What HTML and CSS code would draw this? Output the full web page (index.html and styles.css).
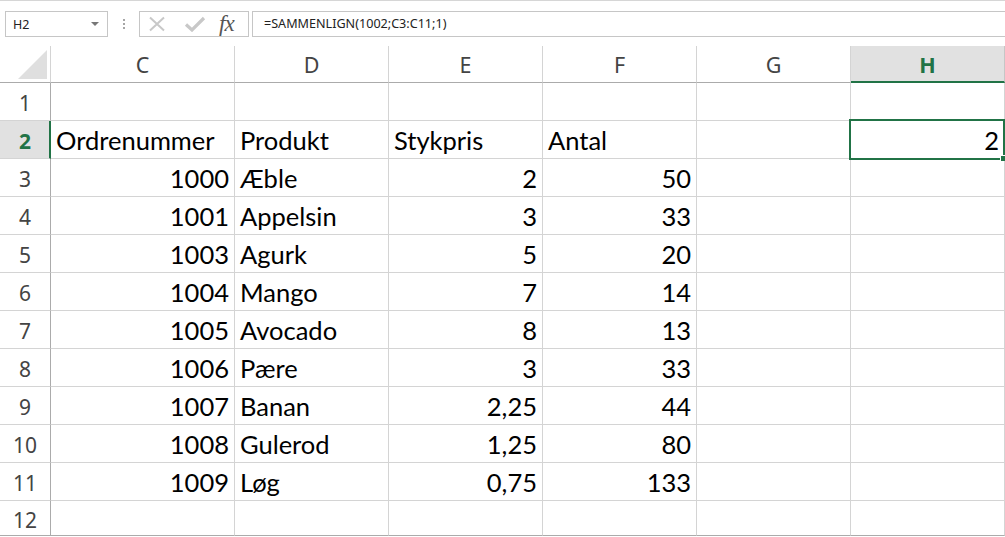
FILE: index.html
```html
<!DOCTYPE html>
<html lang="da">
<head>
<meta charset="utf-8">
<title>Excel</title>
<link rel="stylesheet" href="styles.css">
</head>
<body>
<div class="app">
  <div class="toolbar">
    <div class="namebox">
      <span class="name">H2</span>
      <span class="caret"></span>
    </div>
    <div class="grip"><i></i><i></i><i></i></div>
    <div class="fxbox">
      <svg class="ico" width="20" height="16" viewBox="0 0 20 16"><path d="M2 1.5 L16 14.5 M16 1.5 L2 14.5" stroke="#c8c8c8" stroke-width="2" fill="none"/></svg>
      <svg class="ico" width="22" height="16" viewBox="0 0 22 16"><path d="M2 8.5 L8 14 L20 2" stroke="#c8c8c8" stroke-width="3.2" fill="none"/></svg>
      <span class="fx">fx</span>
    </div>
    <div class="formula">=SAMMENLIGN(1002;C3:C11;1)</div>
  </div>
  <div class="sheet">
    <div class="corner"><span class="tri"></span></div>
    <div class="ch">C</div><div class="ch">D</div><div class="ch">E</div><div class="ch">F</div><div class="ch">G</div><div class="ch ch-sel">H</div>

    <div class="rh">1</div><div class="c"></div><div class="c"></div><div class="c"></div><div class="c"></div><div class="c"></div><div class="c"></div>

    <div class="rh rh-sel">2</div><div class="c">Ordrenummer</div><div class="c">Produkt</div><div class="c">Stykpris</div><div class="c">Antal</div><div class="c"></div><div class="c n sel">2<span class="selbox"></span><span class="handle"></span></div>

    <div class="rh">3</div><div class="c n">1000</div><div class="c">Æble</div><div class="c n">2</div><div class="c n">50</div><div class="c"></div><div class="c"></div>
    <div class="rh">4</div><div class="c n">1001</div><div class="c">Appelsin</div><div class="c n">3</div><div class="c n">33</div><div class="c"></div><div class="c"></div>
    <div class="rh">5</div><div class="c n">1003</div><div class="c">Agurk</div><div class="c n">5</div><div class="c n">20</div><div class="c"></div><div class="c"></div>
    <div class="rh">6</div><div class="c n">1004</div><div class="c">Mango</div><div class="c n">7</div><div class="c n">14</div><div class="c"></div><div class="c"></div>
    <div class="rh">7</div><div class="c n">1005</div><div class="c">Avocado</div><div class="c n">8</div><div class="c n">13</div><div class="c"></div><div class="c"></div>
    <div class="rh">8</div><div class="c n">1006</div><div class="c">Pære</div><div class="c n">3</div><div class="c n">33</div><div class="c"></div><div class="c"></div>
    <div class="rh">9</div><div class="c n">1007</div><div class="c">Banan</div><div class="c n">2,25</div><div class="c n">44</div><div class="c"></div><div class="c"></div>
    <div class="rh">10</div><div class="c n">1008</div><div class="c">Gulerod</div><div class="c n">1,25</div><div class="c n">80</div><div class="c"></div><div class="c"></div>
    <div class="rh">11</div><div class="c n">1009</div><div class="c">Løg</div><div class="c n">0,75</div><div class="c n">133</div><div class="c"></div><div class="c"></div>
    <div class="rh last">12</div><div class="c last"></div><div class="c last"></div><div class="c last"></div><div class="c last"></div><div class="c last"></div><div class="c last"></div>
  </div>
</div>
</body>
</html>
```
FILE: styles.css
```css
html, body {
  margin: 0;
  padding: 0;
  background: #ffffff;
}
.app {
  width: 1005px;
  height: 537px;
  overflow: hidden;
  font-family: "Noto Sans", "Open Sans", sans-serif;
}
.toolbar {
  height: 46px;
  border-top: 1px solid #d6d6d6;
  display: flex;
  align-items: flex-start;
  box-sizing: border-box;
  padding-top: 10px;
  padding-left: 5px;
}
.namebox {
  height: 24px;
  border: 1px solid #c6c6c6;
  display: flex;
  align-items: center;
  justify-content: space-between;
  padding: 0 8px 0 7px;
  box-sizing: content-box;
  width: 86px;
}
.name {
  font-size: 12.5px;
  color: #222;
}
.caret {
  width: 0;
  height: 0;
  border-left: 4px solid transparent;
  border-right: 4px solid transparent;
  border-top: 4px solid #777;
}
.grip {
  width: 31px;
  height: 26px;
  display: flex;
  flex-direction: column;
  align-items: center;
  justify-content: center;
  gap: 2px;
}
.grip i {
  display: block;
  width: 2px;
  height: 2px;
  background: #a6a6a6;
}
.fxbox {
  height: 24px;
  border: 1px solid #c6c6c6;
  display: flex;
  align-items: center;
  padding-left: 8px;
  gap: 16px;
  box-sizing: content-box;
  width: 100px;
}
.ico {
  display: block;
}
.fx {
  font-family: "Liberation Serif", "DejaVu Serif", serif;
  font-style: italic;
  font-size: 23px;
  color: #555;
  letter-spacing: -1px;
  margin-left: -3px;
  line-height: 24px;
}
.formula {
  margin-left: 3px;
  flex: 1;
  height: 24px;
  border: 1px solid #c6c6c6;
  border-right: none;
  font-size: 12.6px;
  line-height: 24px;
  padding-left: 11px;
  color: #222;
}
.sheet {
  display: grid;
  grid-template-columns: 51px 184px 154px 154px 154px 154px 154px;
  grid-template-rows: 37px repeat(11, 38px) 35px;
}
.corner {
  border-right: 1px solid #d4d4d4;
  border-bottom: 1px solid #ababab;
  position: relative;
}
.tri {
  position: absolute;
  right: 3px;
  bottom: 3px;
  width: 0;
  height: 0;
  border-left: 29px solid transparent;
  border-bottom: 29px solid #dfdfdf;
}
.ch {
  border-right: 1px solid #d4d4d4;
  border-bottom: 1px solid #ababab;
  display: flex;
  align-items: center;
  justify-content: center;
  font-size: 21.5px;
  color: #444;
  padding-top: 1px;
}
.ch-sel {
  background: #e1e1e1;
  color: #217346;
  font-weight: 700;
  border-bottom: 2px solid #217346;
  border-right-color: #c6c6c6;
}
.rh {
  border-right: 1px solid #ababab;
  border-bottom: 1px solid #d4d4d4;
  display: flex;
  align-items: center;
  justify-content: center;
  font-size: 21px;
  color: #444;
  padding-top: 3px;
  box-sizing: border-box;
}
.rh-sel {
  background: #e1e1e1;
  color: #217346;
  font-weight: 700;
  border-right: 2px solid #217346;
  padding-left: 1px;
}
.c {
  border-right: 1px solid #d4d4d4;
  border-bottom: 1px solid #d4d4d4;
  font-family: "Lato", "Noto Sans", sans-serif;
  font-size: 25.5px;
  line-height: 30px;
  color: #000;
  display: flex;
  align-items: flex-end;
  padding: 0 5px 3px 5px;
  box-sizing: border-box;
  white-space: nowrap;
}
.n {
  justify-content: flex-end;
}
.last {
  border-bottom-color: #ababab;
}
.sel {
  position: relative;
}
.selbox {
  position: absolute;
  left: -2px;
  top: -2px;
  width: 156px;
  height: 41px;
  border: 2px solid #217346;
  box-sizing: border-box;
}
.handle {
  position: absolute;
  right: -2px;
  bottom: -3px;
  width: 5px;
  height: 5px;
  background: #217346;
  border-left: 1px solid #fff;
  border-top: 1px solid #fff;
}
```
